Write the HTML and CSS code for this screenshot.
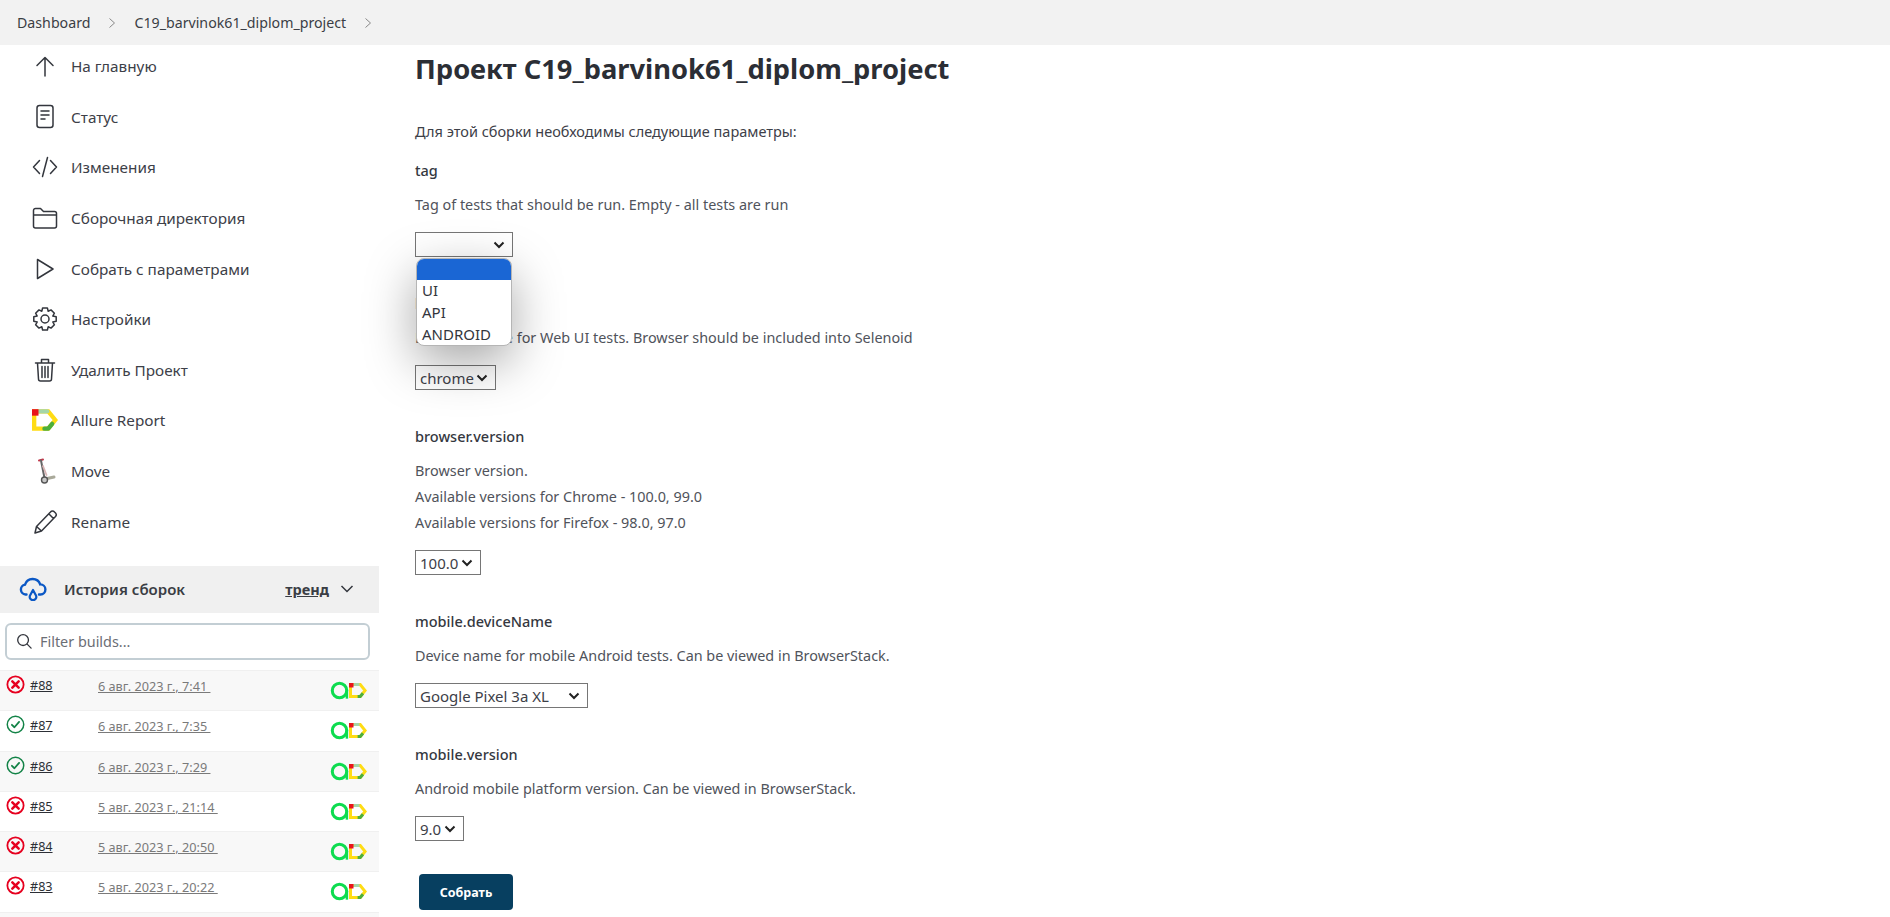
FILE: index.html
```html
<!DOCTYPE html>
<html lang="ru">
<head>
<meta charset="utf-8">
<title>C19_barvinok61_diplom_project</title>
<link rel="stylesheet" href="styles.css">
</head>
<body>
<svg class="defs" width="0" height="0" aria-hidden="true">
  <symbol id="allure" viewBox="0 0 24 22">
    <path d="M2 3 H15 L21.5 11 L15 19 H2 Z" fill="none" stroke="#ffdc14" stroke-width="4" stroke-linejoin="miter"/>
    <path d="M6 3 H14" fill="none" stroke="#a5d6a7" stroke-width="4"/>
    <rect x="0" y="1" width="6" height="6" fill="#e8141c"/>
    <path d="M18.6 14.6 L15 19 H11.5" fill="none" stroke="#4caf3c" stroke-width="4"/>
  </symbol>
  <symbol id="aicon" viewBox="0 0 20 20">
    <circle cx="10" cy="10" r="7.6" fill="none" stroke="#0ddc4f" stroke-width="3.2"/>
    <path d="M17.8 9 V18.6" fill="none" stroke="#0ddc4f" stroke-width="2.6"/>
  </symbol>
  <symbol id="fail" viewBox="0 0 18 18">
    <circle cx="9" cy="9" r="7.7" fill="none" stroke="#e6001f" stroke-width="1.7"/>
    <path d="M6 6 L12 12 M12 6 L6 12" fill="none" stroke="#e6001f" stroke-width="2.4" stroke-linecap="round"/>
  </symbol>
  <symbol id="ok" viewBox="0 0 18 18">
    <circle cx="9" cy="9" r="7.8" fill="none" stroke="#138347" stroke-width="1.4"/>
    <path d="M5.6 9.3 L8 11.6 L12.4 6.6" fill="none" stroke="#138347" stroke-width="1.7" stroke-linecap="round" stroke-linejoin="round"/>
  </symbol>
  <symbol id="cloud" viewBox="0 0 28 24">
    <path d="M7.5 17.5 H6.5 A5 5 0 0 1 6 7.6 A8 8 0 0 1 21.2 7.4 A5 5 0 0 1 21.5 17.5 H20" fill="none" stroke="#0b58c5" stroke-width="2.4" stroke-linecap="round"/>
    <path d="M14 13 L17 18.5 A3.3 3.3 0 1 1 11 18.5 Z" fill="none" stroke="#0b58c5" stroke-width="2.2" stroke-linejoin="round"/>
  </symbol>
</svg>

<header class="breadcrumb">
  <span class="crumb">Dashboard</span>
  <svg class="crumb-sep" viewBox="0 0 8 12"><path d="M1.5 1.5 L6.5 6 L1.5 10.5"/></svg>
  <span class="crumb">C19_barvinok61_diplom_project</span>
  <svg class="crumb-sep" viewBox="0 0 8 12"><path d="M1.5 1.5 L6.5 6 L1.5 10.5"/></svg>
</header>

<div class="layout">
  <aside class="sidebar">
    <nav class="tasks">
      <a class="task">
        <span class="task-icon"><svg viewBox="0 0 26 26"><path d="M13 23 V5 M5 12.5 L13 4.5 L21 12.5"/></svg></span>
        <span>На главную</span>
      </a>
      <a class="task">
        <span class="task-icon"><svg viewBox="0 0 26 26"><rect x="5" y="1.5" width="16" height="22" rx="2.5"/><path d="M9 7 H17 M9 11 H17 M9 15 H13"/></svg></span>
        <span>Статус</span>
      </a>
      <a class="task">
        <span class="task-icon"><svg viewBox="0 0 26 26"><path d="M7.5 6.5 L1.5 13 L7.5 19.5 M18.5 6.5 L24.5 13 L18.5 19.5 M15.5 3.5 L10.5 22.5"/></svg></span>
        <span>Изменения</span>
      </a>
      <a class="task">
        <span class="task-icon"><svg viewBox="0 0 26 26"><path d="M1.5 21 V5.5 A2 2 0 0 1 3.5 3.5 H8.5 L11.5 6.5 H22.5 A2 2 0 0 1 24.5 8.5 V21 A2 2 0 0 1 22.5 23 H3.5 A2 2 0 0 1 1.5 21 Z M1.5 10 H24.5"/></svg></span>
        <span>Сборочная директория</span>
      </a>
      <a class="task">
        <span class="task-icon"><svg viewBox="0 0 26 26"><path d="M5.5 3.5 L21 13 L5.5 22.5 Z"/></svg></span>
        <span>Собрать с параметрами</span>
      </a>
      <a class="task">
        <span class="task-icon"><svg viewBox="0 0 26 26"><circle cx="13" cy="13" r="4"/><path d="M10.6 2 H15.4 L16.2 5.2 L19 3.9 L22.4 7.2 L20.8 10 L24.2 10.7 V15.3 L20.8 16 L22.4 18.8 L19 22.1 L16.2 20.8 L15.4 24 H10.6 L9.8 20.8 L7 22.1 L3.6 18.8 L5.2 16 L1.8 15.3 V10.7 L5.2 10 L3.6 7.2 L7 3.9 L9.8 5.2 Z"/></svg></span>
        <span>Настройки</span>
      </a>
      <a class="task">
        <span class="task-icon"><svg viewBox="0 0 26 26"><path d="M3.5 6 H22.5 M9.5 5.5 V2.5 H16.5 V5.5 M5.5 6 L6.5 22 A2 2 0 0 0 8.5 24 H17.5 A2 2 0 0 0 19.5 22 L20.5 6 M10 9.5 V20.5 M13 9.5 V20.5 M16 9.5 V20.5"/></svg></span>
        <span>Удалить Проект</span>
      </a>
      <a class="task">
        <span class="task-icon"><svg class="icon-raw" viewBox="0 0 24 22"><use href="#allure"/></svg></span>
        <span>Allure Report</span>
      </a>
      <a class="task">
        <span class="task-icon"><svg class="icon-raw" viewBox="0 0 26 26"><path d="M7 2.5 L11 1.5" stroke="#c0394b" stroke-width="2" fill="none"/><path d="M9 2.5 L12.5 20" stroke="#666" stroke-width="2" fill="none"/><path d="M11 8 L14.5 17" stroke="#d8b4b4" stroke-width="1.8" fill="none"/><path d="M13 21 L22 19" stroke="#a9a99a" stroke-width="3" fill="none"/><circle cx="12.5" cy="22" r="3" fill="#c8c8c8" stroke="#555" stroke-width="1.4"/></svg></span>
        <span>Move</span>
      </a>
      <a class="task">
        <span class="task-icon"><svg viewBox="0 0 26 26"><path d="M3 24 L4.5 17.5 L18.5 3 A2.6 2.6 0 0 1 22.5 3 L23.5 4 A2.6 2.6 0 0 1 23.5 7.5 L9.5 22 Z M4.5 17.5 L9.5 22 M17 5 L21.5 9.5"/></svg></span>
        <span>Rename</span>
      </a>
    </nav>

    <section class="history">
      <div class="history-head">
        <svg class="history-icon"><use href="#cloud"/></svg>
        <span class="history-title">История сборок</span>
        <a class="history-trend">тренд</a>
        <svg class="history-chevron" viewBox="0 0 14 10"><path d="M1.5 2 L7 7.5 L12.5 2"/></svg>
      </div>
      <div class="filter">
        <div class="filter-box">
          <svg class="filter-icon" viewBox="0 0 18 18"><circle cx="7.5" cy="7.5" r="5.7"/><path d="M11.8 11.8 L16 16"/></svg>
          <span>Filter builds...</span>
        </div>
      </div>
      <div class="builds">
        <div class="build">
          <svg class="build-status"><use href="#fail"/></svg>
          <a class="build-num">#88</a><a class="build-date">6 авг. 2023 г., 7:41 </a>
          <span class="build-badges"><svg class="badge-a"><use href="#aicon"/></svg><svg class="badge-d"><use href="#allure"/></svg></span>
        </div>
        <div class="build">
          <svg class="build-status"><use href="#ok"/></svg>
          <a class="build-num">#87</a><a class="build-date">6 авг. 2023 г., 7:35 </a>
          <span class="build-badges"><svg class="badge-a"><use href="#aicon"/></svg><svg class="badge-d"><use href="#allure"/></svg></span>
        </div>
        <div class="build">
          <svg class="build-status"><use href="#ok"/></svg>
          <a class="build-num">#86</a><a class="build-date">6 авг. 2023 г., 7:29 </a>
          <span class="build-badges"><svg class="badge-a"><use href="#aicon"/></svg><svg class="badge-d"><use href="#allure"/></svg></span>
        </div>
        <div class="build">
          <svg class="build-status"><use href="#fail"/></svg>
          <a class="build-num">#85</a><a class="build-date">5 авг. 2023 г., 21:14 </a>
          <span class="build-badges"><svg class="badge-a"><use href="#aicon"/></svg><svg class="badge-d"><use href="#allure"/></svg></span>
        </div>
        <div class="build">
          <svg class="build-status"><use href="#fail"/></svg>
          <a class="build-num">#84</a><a class="build-date">5 авг. 2023 г., 20:50 </a>
          <span class="build-badges"><svg class="badge-a"><use href="#aicon"/></svg><svg class="badge-d"><use href="#allure"/></svg></span>
        </div>
        <div class="build">
          <svg class="build-status"><use href="#fail"/></svg>
          <a class="build-num">#83</a><a class="build-date">5 авг. 2023 г., 20:22 </a>
          <span class="build-badges"><svg class="badge-a"><use href="#aicon"/></svg><svg class="badge-d"><use href="#allure"/></svg></span>
        </div>
        <div class="build">
          <svg class="build-status"><use href="#ok"/></svg>
        </div>
      </div>
    </section>
  </aside>

  <main class="main">
    <h1>Проект C19_barvinok61_diplom_project</h1>
    <p class="intro">Для этой сборки необходимы следующие параметры:</p>

    <div class="param">
      <div class="param-name">tag</div>
      <div class="param-desc">Tag of tests that should be run. Empty - all tests are run</div>
      <div class="select-wrap">
        <select class="sel sel-tag"><option></option><option>UI</option><option>API</option><option>ANDROID</option></select>
        <div class="popup">
          <div class="popup-opt popup-sel"></div>
          <div class="popup-opt">UI</div>
          <div class="popup-opt">API</div>
          <div class="popup-opt">ANDROID</div>
        </div>
      </div>
    </div>

    <div class="param">
      <div class="param-name">browser</div>
      <div class="param-desc">Browser name for Web UI tests. Browser should be included into Selenoid</div>
      <select class="sel sel-browser"><option>chrome</option><option>firefox</option></select>
    </div>

    <div class="param">
      <div class="param-name">browser.version</div>
      <div class="param-desc">Browser version.<br>Available versions for Chrome - 100.0, 99.0<br>Available versions for Firefox - 98.0, 97.0</div>
      <select class="sel sel-version"><option>100.0</option></select>
    </div>

    <div class="param">
      <div class="param-name">mobile.deviceName</div>
      <div class="param-desc">Device name for mobile Android tests. Can be viewed in BrowserStack.</div>
      <select class="sel sel-device"><option>Google Pixel 3a XL</option></select>
    </div>

    <div class="param">
      <div class="param-name">mobile.version</div>
      <div class="param-desc">Android mobile platform version. Can be viewed in BrowserStack.</div>
      <select class="sel sel-mobile"><option>9.0</option></select>
    </div>

    <button class="build-btn">Собрать</button>
  </main>
</div>
</body>
</html>
```
FILE: styles.css
```css
* { box-sizing: border-box; }
html, body { margin: 0; height: 917px; overflow: hidden; }
body {
  background: #fff;
  color: #333;
  font-family: "Noto Sans", "Open Sans", "Liberation Sans", sans-serif;
  font-size: 14.5px;
  display: flex;
  flex-direction: column;
}
.defs { position: absolute; }

.breadcrumb {
  flex: 0 0 45px;
  background: #f2f2f2;
  display: flex;
  align-items: center;
  padding-left: 17px;
  position: relative;
  z-index: 1;
  font-size: 14.2px;
  color: #3b3e45;
}
.crumb-sep { width: 8px; height: 12px; margin: 0 18px; fill: none; stroke: #888; stroke-width: 1; }

.layout { flex: 1; display: flex; min-height: 0; }

.sidebar { flex: 0 0 379px; display: flex; flex-direction: column; }
.tasks { margin-top: -4px; display: flex; flex-direction: column; margin-bottom: 19px; }
.task {
  height: 50.6px;
  display: flex;
  align-items: center;
  gap: 13px;
  padding-left: 32px;
  color: #3d4048;
  font-size: 15.3px;
}
.task-icon { width: 26px; height: 26px; flex: none; display: block; }
.task-icon svg { width: 26px; height: 26px; display: block; fill: none; stroke: #33363d; stroke-width: 1.5; stroke-linecap: round; stroke-linejoin: round; }
.task-icon svg.icon-raw { stroke: none; }

.history-head {
  height: 47px;
  background: #f0f0f0;
  display: flex;
  align-items: center;
  padding-left: 19px;
  font-weight: 600;
  color: #3a3d44;
  font-size: 15px;
}
.history-icon { width: 28px; height: 24px; margin-right: 17px; }
.history-title { flex: 1; }
.history-trend { text-decoration: underline; margin-right: 11px; font-weight: 700; font-size: 14.5px; }
.history-chevron { width: 14px; height: 10px; margin-right: 25px; fill: none; stroke: #33363d; stroke-width: 1.5; }

.filter { padding: 10px 9px 10px 5px; }
.filter-box {
  height: 37px;
  border: 2px solid #c3ced4;
  border-radius: 6px;
  display: flex;
  align-items: center;
  gap: 7px;
  padding-left: 9px;
  color: #6b6e75;
  font-size: 14.4px;
}
.filter-icon { width: 17px; height: 17px; fill: none; stroke: #33363d; stroke-width: 1.4; stroke-linecap: round; }

.build {
  height: 40.3px;
  display: flex;
  align-items: flex-start;
  padding: 4px 12px 0 6px;
  border-top: 1px solid #f0f0f0;
}
.build:nth-child(odd) { background: #f8f8f8; }
.build-status { width: 19px; height: 19px; flex: none; }
.build-num { margin: 1px 0 0 5px; width: 68px; text-decoration: underline; color: #2c2f36; font-size: 12.6px; line-height: 20px; }
.build-date { margin-top: 1px; text-decoration: underline; color: #7a7a7a; font-size: 12.7px; line-height: 20px; white-space: pre; }
.build-badges { margin-left: auto; display: flex; align-items: center; margin-top: 6px; }
.badge-a { width: 19px; height: 19px; }
.badge-d { width: 18px; height: 17px; }

.main { flex: 1; padding: 0 0 0 36px; min-width: 0; }
h1 { margin: 7px 0 0; font-size: 27.3px; line-height: 34px; font-weight: 700; color: #2b2e35; }
.intro { margin: 32px 0 0; line-height: 26px; font-size: 14.5px; color: #3d4048; height: 26px; }
.param { margin-bottom: 34px; }
.intro + .param { margin-top: 14px; }
.param-name { height: 24px; line-height: 24px; font-weight: 500; font-size: 14.5px; color: #35383f; margin-bottom: 10px; }
.param-desc { line-height: 26px; color: #50535b; font-size: 14.4px; margin-bottom: 14px; }
.sel {
  display: block;
  height: 25px;
  font-family: inherit;
  font-size: 15px;
  color: #3d4048;
  border: 1px solid #767676;
  border-radius: 0;
  padding: 0 0 0 4px;
  appearance: none;
  background: #fff url("data:image/svg+xml,%3Csvg xmlns='http://www.w3.org/2000/svg' width='12' height='8'%3E%3Cpath d='M1.5 1.5 L6 6 L10.5 1.5' fill='none' stroke='%23222' stroke-width='2'/%3E%3C/svg%3E") no-repeat right 7px center;
}
.sel-tag { width: 98px; }
.sel-browser { width: 81px; }
.sel-version { width: 66px; }
.sel-device { width: 173px; }
.sel-mobile { width: 49px; }
.select-wrap { position: relative; }
.popup {
  position: absolute;
  left: 1px;
  top: 26px;
  width: 96px;
  height: 88px;
  background: #fff;
  border: 1px solid #b5b5b5;
  border-radius: 8px;
  overflow: hidden;
  z-index: 5;
  box-shadow: 0 16px 50px rgba(0, 0, 0, 0.35);
  font-size: 15px;
  color: #33363d;
}
.popup-opt { height: 22px; line-height: 20px; padding-left: 5px; }
.popup-sel { background: #1a66d4; height: 21px; }

.build-btn {
  display: block;
  margin: -1px 0 0 4px;
  width: 94px;
  height: 36px;
  border: 0;
  border-radius: 4px;
  background: #073f60;
  color: #fff;
  font-family: inherit;
  font-size: 12.5px;
  font-weight: 700;
}
```
